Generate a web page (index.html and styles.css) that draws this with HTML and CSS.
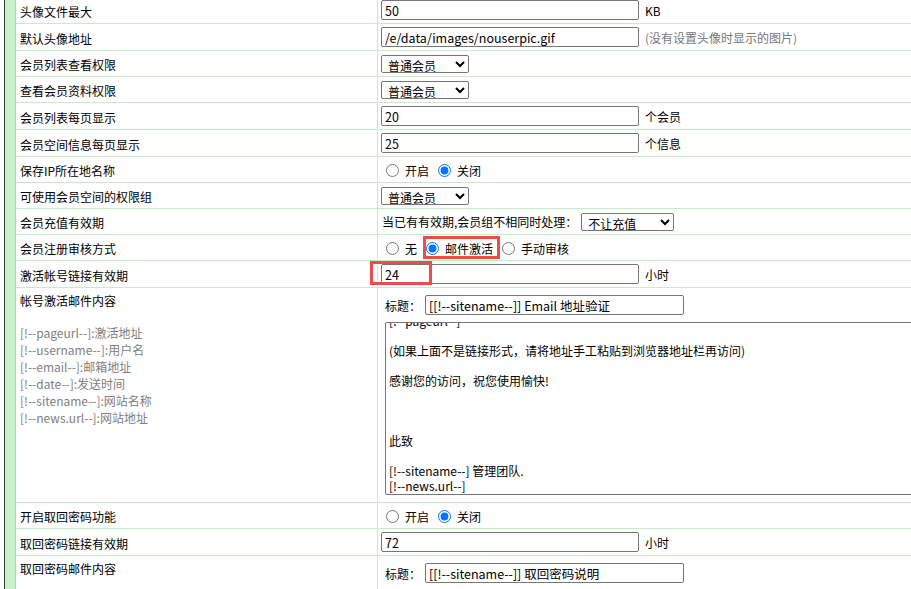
FILE: index.html
```html
<!DOCTYPE html>
<html lang="zh-CN">
<head>
<meta charset="utf-8">
<title>会员设置</title>
<link rel="stylesheet" href="styles.css">
</head>
<body>
<div class="frame">
  <div class="sheet">
    <div class="row in">
      <div class="lab">头像文件最大</div>
      <div class="val"><input class="txt" type="text" value="50"><span class="unit">KB</span></div>
    </div>
    <div class="row in">
      <div class="lab">默认头像地址</div>
      <div class="val"><input class="txt" type="text" value="/e/data/images/nouserpic.gif"><span class="unit note">(没有设置头像时显示的图片)</span></div>
    </div>
    <div class="row">
      <div class="lab">会员列表查看权限</div>
      <div class="val"><select class="sel"><option>普通会员</option></select></div>
    </div>
    <div class="row">
      <div class="lab">查看会员资料权限</div>
      <div class="val"><select class="sel"><option>普通会员</option></select></div>
    </div>
    <div class="row in">
      <div class="lab">会员列表每页显示</div>
      <div class="val"><input class="txt" type="text" value="20"><span class="unit">个会员</span></div>
    </div>
    <div class="row in">
      <div class="lab">会员空间信息每页显示</div>
      <div class="val"><input class="txt" type="text" value="25"><span class="unit">个信息</span></div>
    </div>
    <div class="row">
      <div class="lab">保存IP所在地名称</div>
      <div class="val radios">
        <label class="opt"><input type="radio" name="ip">开启</label>
        <label class="opt"><input type="radio" name="ip" checked>关闭</label>
      </div>
    </div>
    <div class="row">
      <div class="lab">可使用会员空间的权限组</div>
      <div class="val"><select class="sel"><option>普通会员</option></select></div>
    </div>
    <div class="row">
      <div class="lab">会员充值有效期</div>
      <div class="val"><span class="pre">当已有有效期,会员组不相同时处理：</span><select class="sel wide"><option>不让充值</option></select></div>
    </div>
    <div class="row">
      <div class="lab">会员注册审核方式</div>
      <div class="val radios">
        <label class="opt"><input type="radio" name="reg">无</label>
        <label class="opt"><input type="radio" name="reg" checked>邮件激活</label>
        <label class="opt"><input type="radio" name="reg">手动审核</label>
      </div>
      <span class="mark mark-radio"></span>
    </div>
    <div class="row in">
      <div class="lab">激活帐号链接有效期</div>
      <div class="val"><input class="txt" type="text" value="24"><span class="unit">小时</span></div>
      <span class="mark mark-input"></span>
    </div>
    <div class="row big">
      <div class="lab vars">
        <div>帐号激活邮件内容</div>
        <div class="gap"></div>
        <div class="var">[!--pageurl--]:激活地址</div>
        <div class="var">[!--username--]:用户名</div>
        <div class="var">[!--email--]:邮箱地址</div>
        <div class="var">[!--date--]:发送时间</div>
        <div class="var">[!--sitename--]:网站名称</div>
        <div class="var">[!--news.url--]:网站地址</div>
      </div>
      <div class="val mail">
        <div class="title-line"><span>标题：</span><input class="txt title" type="text" value="[[!--sitename--]] Email 地址验证"></div>
        <div class="ta"><div class="ta-body">[!--pageurl--]

(如果上面不是链接形式，请将地址手工粘贴到浏览器地址栏再访问)

感谢您的访问，祝您使用愉快!



此致

[!--sitename--] 管理团队.
[!--news.url--]</div></div>
      </div>
    </div>
    <div class="row">
      <div class="lab">开启取回密码功能</div>
      <div class="val radios">
        <label class="opt"><input type="radio" name="pw">开启</label>
        <label class="opt"><input type="radio" name="pw" checked>关闭</label>
      </div>
    </div>
    <div class="row in">
      <div class="lab">取回密码链接有效期</div>
      <div class="val"><input class="txt" type="text" value="72"><span class="unit">小时</span></div>
    </div>
    <div class="row big">
      <div class="lab vars"><div>取回密码邮件内容</div></div>
      <div class="val mail">
        <div class="title-line"><span>标题：</span><input class="txt title" type="text" value="[[!--sitename--]] 取回密码说明"></div>
      </div>
    </div>
  </div>
</div>
</body>
</html>
```

FILE: styles.css
```css
html, body {
  margin: 0;
  padding: 0;
  background: #fff;
  overflow: hidden;
}

body {
  font-family: "Noto Sans CJK SC", sans-serif;
  font-size: 12px;
  color: #000;
}

.frame {
  margin-left: 4px;
  border-left: 1px solid #3c3c3c;
  padding-left: 10px;
  background: #c9f1c9;
  min-height: 100vh;
}

.sheet {
  background: #fff;
  border-left: 1px solid #a6dca6;
  margin-top: -3px;
  min-height: calc(100vh + 3px);
  display: flex;
  flex-direction: column;
}

.row {
  position: relative;
  display: grid;
  grid-template-columns: 361px minmax(0, 1fr);
  border-bottom: 1px solid #c6eec6;
  box-sizing: border-box;
  min-height: 26px;
}

.row.in {
  min-height: 27px;
}

.row.big:last-child {
  flex: 1;
  border-bottom: 0;
}

.lab {
  display: flex;
  align-items: center;
  padding: 2px 4px 0;
  line-height: 17px;
}

.val {
  display: flex;
  align-items: center;
  border-left: 1px solid #c6eec6;
  padding-left: 3px;
  overflow: hidden;
  white-space: nowrap;
}

.txt {
  width: 258px;
  height: 20px;
  box-sizing: border-box;
  margin: 0;
  padding: 0 3px;
  border: 1px solid #767676;
  border-radius: 2px;
  background: #fff;
  font-family: "Noto Sans CJK SC", sans-serif;
  font-size: 12.5px;
  color: #000;
}

.unit {
  margin-left: 6px;
}

.note {
  color: #777;
}

.sel {
  width: 88px;
  height: 18px;
  box-sizing: border-box;
  margin: 0;
  padding: 0 0 0 2px;
  border: 1px solid #767676;
  border-radius: 2px;
  background: #fff;
  font-family: "Noto Sans CJK SC", sans-serif;
  font-size: 12px;
  color: #000;
}

.sel.wide {
  width: 93px;
}

.pre {
  margin-left: 1px;
  margin-right: 4px;
}

.radios {
  padding-top: 2px;
}

.opt {
  display: inline-flex;
  align-items: center;
}

.opt + .opt {
  margin-left: 4px;
}

.opt input {
  width: 13px;
  height: 13px;
  margin: 0 6px 0 5px;
}

.mark {
  position: absolute;
  border: 3px solid #ef4b4b;
  box-sizing: border-box;
  pointer-events: none;
}

.mark-radio {
  left: 407px;
  top: 1px;
  width: 77px;
  height: 23px;
}

.mark-input {
  left: 354px;
  top: 0;
  width: 62px;
  height: 24px;
}

.vars {
  display: block;
  padding-top: 4px;
}

.gap {
  height: 15px;
}

.var {
  color: #808080;
}

.mail {
  display: block;
  padding: 7px 0 7px 7px;
}

.title-line {
  display: flex;
  align-items: center;
  height: 20px;
  margin-bottom: 7px;
}

.title-line span {
  width: 40px;
}

.txt.title {
  width: 259px;
}

.ta {
  width: 600px;
  height: 173px;
  box-sizing: border-box;
  border: 1px solid #767676;
  border-radius: 2px 0 0 2px;
  padding: 0 3px;
  overflow: hidden;
}

.ta-body {
  margin-top: -10px;
  white-space: pre;
  line-height: 15px;
  font-size: 12px;
}
```
